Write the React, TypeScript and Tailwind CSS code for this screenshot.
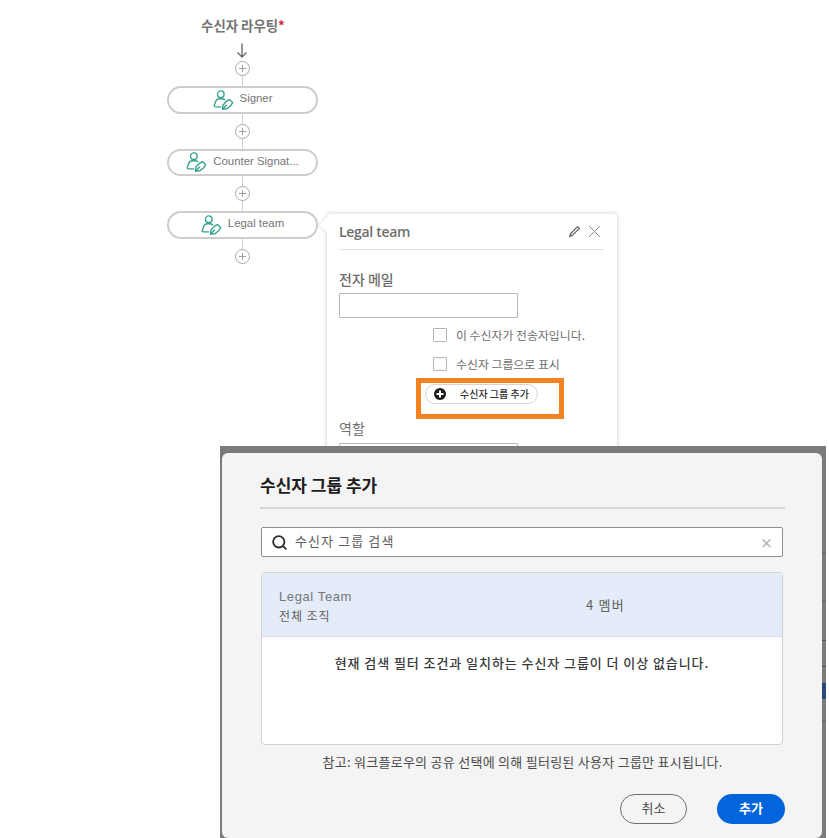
import { Fragment } from 'react'
import { X, Search } from 'lucide-react'

const KR = "font-['Noto_Sans_CJK_KR','Noto_Sans',sans-serif]"
const ARIAL = "font-['Liberation_Sans','Noto_Sans_CJK_KR',sans-serif]"

const recipients = ['Signer', 'Counter Signat...', 'Legal team']

// ── Routing column ─────────────────────────────────────────────────────────

function SignerIcon() {
  return (
    <svg width="21" height="20" viewBox="0 0 21 20" fill="none" stroke="#35a18a" strokeWidth="1.35" strokeLinecap="round" strokeLinejoin="round" className="shrink-0">
      <circle cx="7.8" cy="4.2" r="3.3" />
      <path d="M11.8 9.6 C10.8 9 9.6 8.7 8.2 8.7 H6.6 C4.4 8.7 3.2 9.8 2.7 11.6 L1.3 15.2 C1 16.2 1.6 16.9 2.6 16.9 H7.6" />
      <path d="M9.6 19 L9.8 15.2 L13.6 11.2 L16.4 9.6 L19.6 12.6 L18 15.4 L14 18.8 Z" />
      <path d="M9.6 19 L13.4 15.2" />
    </svg>
  )
}

function AddDot() {
  return (
    <div className="w-[15px] h-[15px] rounded-full border-[1.5px] border-[#a9a9a9] bg-white flex items-center justify-center shrink-0 -ml-px">
      <svg width="9" height="9" viewBox="0 0 9 9" stroke="#a0a0a0" strokeWidth="1">
        <path d="M4.5 1 V8 M1 4.5 H8" />
      </svg>
    </div>
  )
}

function Connector({ h }: { h: string }) {
  return <div className={`w-px bg-[#cfcfcf] -ml-px ${h}`} />
}

function RecipientPill({ label }: { label: string }) {
  return (
    <div className="w-[151px] h-[27.5px] rounded-full border-2 border-[#cdcdcd] bg-white flex items-center justify-center gap-[6px] shrink-0">
      <SignerIcon />
      <span className={`${ARIAL} text-[11.4px] leading-none text-[#757575] -mt-[2px] whitespace-nowrap`}>{label}</span>
    </div>
  )
}

function RoutingColumn() {
  return (
    <div className="w-[151px] ml-[167px] pt-[16px] flex flex-col items-center">
      <div className={`${KR} text-[13.4px] leading-[18px] font-bold text-[#747474] whitespace-nowrap ml-px`}>
        수신자 라우팅<span className="text-[#d7263d]">*</span>
      </div>
      <svg width="12" height="15" viewBox="0 0 12 15" fill="none" stroke="#6b6b6b" strokeWidth="1.4" className="mt-[9px] mb-[3px] -ml-px">
        <path d="M6 0.5 V14 M1.5 9.5 L6 14 L10.5 9.5" />
      </svg>
      <AddDot />
      <Connector h="h-[10px]" />
      {recipients.map((name) => (
        <Fragment key={name}>
          <RecipientPill label={name} />
          <Connector h="h-[10px]" />
          <AddDot />
          {name !== 'Legal team' && <Connector h="h-[10px]" />}
        </Fragment>
      ))}
    </div>
  )
}

// ── Recipient popover ──────────────────────────────────────────────────────

function CheckRow({ label }: { label: string }) {
  return (
    <div className="flex items-center gap-[9px] ml-[94px] h-[15px]">
      <div className="w-[14px] h-[14px] border border-[#b5b5b5] rounded-[1px] bg-white" />
      <span className={`${KR} text-[11.9px] leading-none text-[#6e6e6e] whitespace-nowrap`}>{label}</span>
    </div>
  )
}

function RecipientPopover() {
  return (
    <div className="absolute left-[327px] top-[214px] w-[290px] h-[240px] bg-white rounded-[3px] shadow-[0_0_5px_rgba(0,0,0,0.22)] pl-[12px] pr-[13px]">
      <div className="absolute -left-[6px] top-[6px] w-[10px] h-[10px] bg-white rotate-45 shadow-[-1px_1px_2px_rgba(0,0,0,0.1)]" />
      <div className="relative">
        <div className="flex items-center justify-between h-[36px] border-b border-[#e1e1e1]">
          <span className="font-['Open_Sans',sans-serif] text-[14px] font-semibold tracking-[-0.3px] text-[#6e6e6e]">Legal team</span>
          <div className="flex items-center gap-[3px] -mr-px">
            <svg width="13" height="13" viewBox="0 0 13 13" fill="#6e6e6e">
              <path d="M9.6 0.8 L12.2 3.4 L4.4 11.2 L0.8 12.2 L1.8 8.6 Z M9.6 2.6 L3 9.2 L3.8 10 L10.4 3.4 Z" fillRule="evenodd" />
            </svg>
            <X size={21} color="#7d7d7d" strokeWidth={1} />
          </div>
        </div>
        <div className={`${KR} text-[14px] leading-[18px] font-medium text-[#6e6e6e] mt-[20px]`}>전자 메일</div>
        <div className="w-[179px] h-[25px] border border-[#b8b8b8] rounded-[1px] mt-[5px]" />
        <div className="mt-[9px]"><CheckRow label="이 수신자가 전송자입니다." /></div>
        <div className="mt-[14px]"><CheckRow label="수신자 그룹으로 표시" /></div>
        <div className="ml-[77px] mt-[7px] w-[148px] h-[41px] border-[5px] border-[#f58220] pl-[4px] pt-px">
          <div className="w-[113px] h-[20px] rounded-full border border-[#d5d5d5] bg-white flex items-center pl-[8px] gap-[14px]">
            <div className="w-[12px] h-[12px] rounded-full bg-[#1b1b1b] flex items-center justify-center shrink-0">
              <svg width="8" height="8" viewBox="0 0 8 8" stroke="#fff" strokeWidth="2">
                <path d="M4 0.5 V7.5 M0.5 4 H7.5" />
              </svg>
            </div>
            <span className={`${KR} text-[10px] leading-none font-medium text-[#2c2c2c] whitespace-nowrap`}>수신자 그룹 추가</span>
          </div>
        </div>
        <div className={`${KR} text-[14px] leading-[18px] text-[#6e6e6e]`}>역할</div>
        <div className="w-[179px] h-[25px] border border-[#b8b8b8] rounded-[1px] mt-[6px]" />
      </div>
    </div>
  )
}

// ── Add recipient group dialog ─────────────────────────────────────────────

function AddGroupDialog() {
  return (
    <div className="absolute left-[220px] top-[446px] w-[606px] h-[392px] bg-[#7b7b7b] pl-[2px] pr-[4px] pt-[7px] overflow-hidden">
      {/* page bits showing through at the right edge */}
      <div className="absolute right-0 top-[237px] w-[4px] h-[16px] bg-[#2a4a7d]" />
      <div className="absolute right-0 top-[106px] w-[4px] h-px bg-[#666666]" />
      <div className="absolute right-0 top-[154px] w-[4px] h-px bg-[#666666]" />
      <div className="absolute right-0 top-[194px] w-[4px] h-px bg-[#555555]" />
      <div className="absolute right-0 top-[220px] w-[4px] h-px bg-[#555555]" />
      <div className="absolute right-0 top-[274px] w-[4px] h-px bg-[#666666]" />

      <div className={`h-[385px] bg-[#f4f4f4] rounded-[6px] pl-[38px] pr-[37px] ${KR}`}>
        <div className="h-[56px] border-b-2 border-[#d6d6d6] flex items-center">
          <span className="text-[17px] font-bold leading-none text-[#1c1c1c] pt-[9px]">수신자 그룹 추가</span>
        </div>
        <div className="ml-px w-[522px] h-[30px] mt-[18px] bg-white border border-[#8f8f8f] rounded-[2px] flex items-center pl-[9px] pr-[9px]">
          <Search size={17} color="#2c2c2c" strokeWidth={2.6} className="shrink-0" />
          <span className="ml-[7px] text-[13px] leading-none tracking-[1.1px] text-[#5c5c5c] -mt-[3px]">수신자 그룹 검색</span>
          <span className="ml-auto text-[13px] font-bold leading-none text-[#b0b0b0]">×</span>
        </div>
        <div className="ml-px w-[522px] h-[173px] mt-[15px] bg-white border border-[#d2d2d2] rounded-[4px] overflow-hidden">
          <div className="h-[64px] bg-[#e3ecf8] border-b border-[#d8dde4] grid grid-cols-[324px_1fr] items-center pl-[17px]">
            <div className="flex flex-col gap-[4px] pt-[3px]">
              <span className={`${ARIAL} text-[13px] leading-[15px] tracking-[0.6px] text-[#757575]`}>Legal Team</span>
              <span className="text-[12px] leading-[15px] tracking-[0.9px] text-[#5e5e5e]">전체 조직</span>
            </div>
            <span className="-ml-[17px] text-[13px] tracking-[1.2px] text-[#5e5e5e]">4 멤버</span>
          </div>
          <p className="text-center text-[13px] leading-[18px] font-medium tracking-[0.93px] text-[#3a3a3a] mt-[17px] whitespace-nowrap">
            현재 검색 필터 조건과 일치하는 수신자 그룹이 더 이상 없습니다.
          </p>
        </div>
        <p className="text-center text-[13px] leading-[18px] tracking-[0.27px] text-[#4b4b4b] mt-[8px] whitespace-nowrap">
          참고: 워크플로우의 공유 선택에 의해 필터링된 사용자 그룹만 표시됩니다.
        </p>
        <div className="flex justify-end gap-[30px] mt-[23px]">
          <button className="w-[67px] h-[30px] rounded-full border border-[#6e6e6e] bg-transparent text-[13px] leading-none text-[#4b4b4b] pb-[3px]">취소</button>
          <button className="w-[68px] h-[30px] rounded-full bg-[#0265dc] text-[13px] leading-none font-bold text-white pb-[3px]">추가</button>
        </div>
      </div>
    </div>
  )
}

export default function App() {
  return (
    <div className="relative w-[829px] h-[838px] bg-white overflow-hidden">
      <RoutingColumn />
      <RecipientPopover />
      <AddGroupDialog />
    </div>
  )
}
